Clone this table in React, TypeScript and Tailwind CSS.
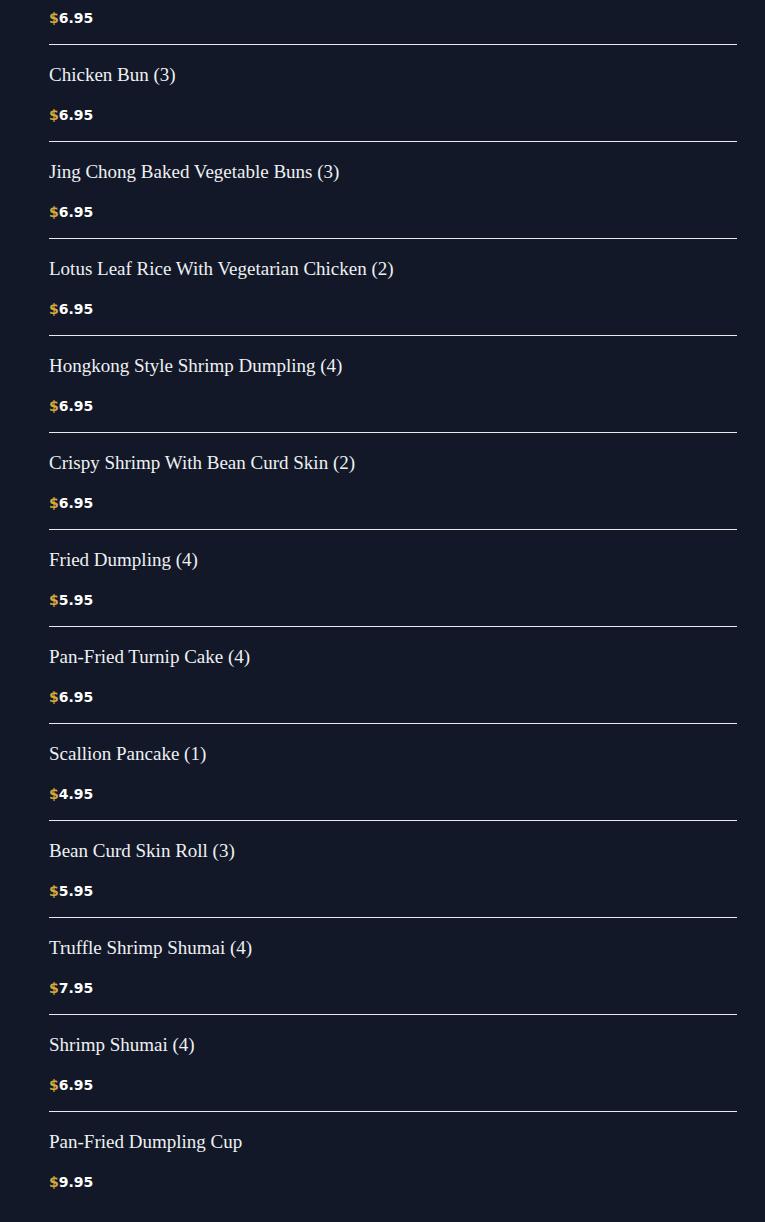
// Dim sum menu list

import React from "react";

const items: { name: string; price: string }[] = [
  { name: "Chicken Bun (3)", price: "6.95" },
  { name: "Jing Chong Baked Vegetable Buns (3)", price: "6.95" },
  { name: "Lotus Leaf Rice With Vegetarian Chicken (2)", price: "6.95" },
  { name: "Hongkong Style Shrimp Dumpling (4)", price: "6.95" },
  { name: "Crispy Shrimp With Bean Curd Skin (2)", price: "6.95" },
  { name: "Fried Dumpling (4)", price: "5.95" },
  { name: "Pan-Fried Turnip Cake (4)", price: "6.95" },
  { name: "Scallion Pancake (1)", price: "4.95" },
  { name: "Bean Curd Skin Roll (3)", price: "5.95" },
  { name: "Truffle Shrimp Shumai (4)", price: "7.95" },
  { name: "Shrimp Shumai (4)", price: "6.95" },
  { name: "Pan-Fried Dumpling Cup", price: "9.95" },
];

// Prix avec le symbole doré
const Price = ({ value }: { value: string }) => (
  <p className="text-sm leading-5 font-bold text-white font-['DejaVu_Sans',sans-serif]">
    <span className="text-[#d6a93a]">$</span>
    {value}
  </p>
);

export default function App() {
  return (
    <div className="min-h-[1222px] w-full bg-[#121827] pl-[49px] pr-[28px]">
      {/* Fin de l'article précédent */}
      <div className="pt-2 pb-4">
        <Price value="6.95" />
      </div>

      {items.map((item) => (
        <div key={item.name} className="border-t border-[#e8eaee] pt-4 pb-4">
          <h3 className="mb-4 text-[19px] leading-7 text-[#eef0f3] font-['Liberation_Serif',serif]">
            {item.name}
          </h3>
          <Price value={item.price} />
        </div>
      ))}
    </div>
  );
}
